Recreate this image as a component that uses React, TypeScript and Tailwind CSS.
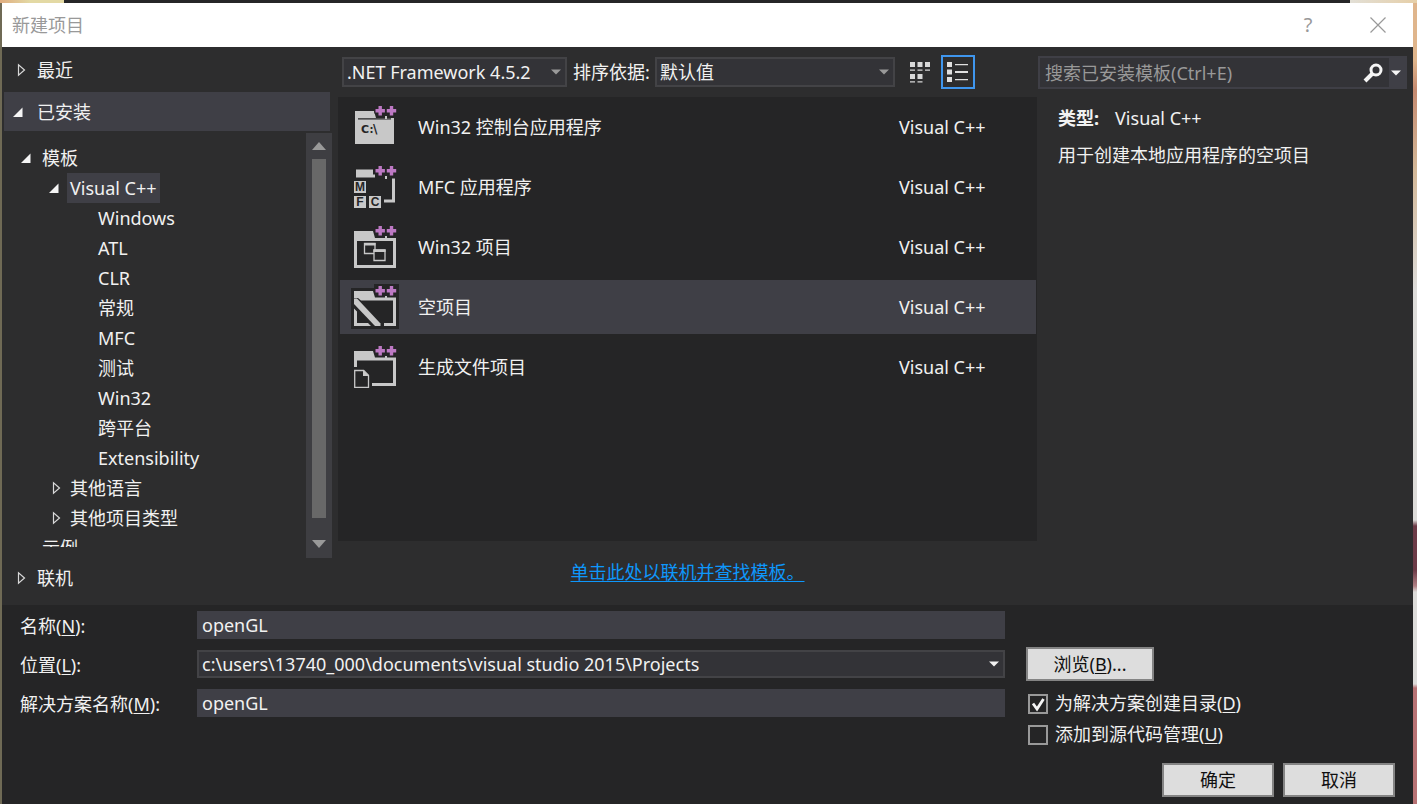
import { useState, type ReactNode } from "react";
import clsx from "clsx";

interface TreeNode {
  label: string;
  level: 0 | 1 | 2;
  state?: "open" | "closed";
}

interface Template {
  id: string;
  name: string;
  icon: ReactNode;
}

const TREE: TreeNode[] = [
  { label: "模板", level: 0, state: "open" },
  { label: "Visual C++", level: 1, state: "open" },
  { label: "Windows", level: 2 },
  { label: "ATL", level: 2 },
  { label: "CLR", level: 2 },
  { label: "常规", level: 2 },
  { label: "MFC", level: 2 },
  { label: "测试", level: 2 },
  { label: "Win32", level: 2 },
  { label: "跨平台", level: 2 },
  { label: "Extensibility", level: 2 },
  { label: "其他语言", level: 1, state: "closed" },
  { label: "其他项目类型", level: 1, state: "closed" },
  { label: "示例", level: 0 },
];

const TREE_INDENT = ["pl-[18px]", "pl-[46px]", "pl-[74px]"];

function Twisty({ open }: { open: boolean }) {
  return (
    <svg width="12" height="14" viewBox="0 0 12 14" className="shrink-0">
      {open ? (
        <path d="M10.5 2.5v9.500H1z" fill="#f5f5f5" />
      ) : (
        <path d="M3.500 1.800v10.400l6-5.200z" fill="none" stroke="#d8d8d8" strokeWidth="1.200" />
      )}
    </svg>
  );
}

function Caret({ className }: { className?: string }) {
  return (
    <svg width="10" height="6" viewBox="0 0 10 6" className={className}>
      <path d="M0 0.500h10L5 5.500z" fill="currentColor" />
    </svg>
  );
}

function IconFrame({ children, plate }: { children: ReactNode; plate?: boolean }) {
  return (
    <svg width="44" height="44" viewBox="0 0 44 44" className="shrink-0 overflow-visible">
      {plate && <path d="M-2 3h23V-1h25v45H-2z" fill="#252526" />}
      {children}
      <path
        d="M25.500 1h3.400v3h3v3.400h-3v3h-3.400v-3h-3V4h3zM36.800 1h3.400v3h3v3.400h-3v3h-3.400v-3h-3V4h3z"
        fill="#bd79c4"
        stroke="#252526"
        strokeWidth="2.400"
        paintOrder="stroke"
      />
      <path d="M32 11h2v3h-2z" fill="#c8c8c8" />
    </svg>
  );
}

const letterStyle = "font-['Liberation_Sans'] font-bold";

const TEMPLATES: Template[] = [
  {
    id: "console",
    name: "Win32 控制台应用程序",
    icon: (
      <IconFrame>
        <path d="M2 6h19l2 7h18v26H2z" fill="#c8c8c8" />
        <path d="M5 13.300h33v1.300H5z" fill="#252526" />
        <text x="8" y="27.500" fontSize="12" fill="#252526" className="font-['DejaVu_Sans'] font-bold">
          <tspan fontSize="11">C</tspan>
          <tspan x="16.500" fontSize="10">:</tspan>
          <tspan x="20">\</tspan>
        </text>
      </IconFrame>
    ),
  },
  {
    id: "mfc",
    name: "MFC 应用程序",
    icon: (
      <IconFrame>
        <path d="M3 4.500h17v5h2v3H3zM39 13.500h3v24H31v-3h8zM1 16h12v12H1zM1 31h12v12H1zM16 31h12v12H16z" fill="#c8c8c8" />
        <g fontSize="12" fill="#252526" textAnchor="middle" className={letterStyle}>
          <text x="7" y="26.300">M</text>
          <text x="7" y="41.300">F</text>
          <text x="22" y="41.300">C</text>
        </g>
      </IconFrame>
    ),
  },
  {
    id: "win32",
    name: "Win32 项目",
    icon: (
      <IconFrame>
        <path fillRule="evenodd" d="M1 6h19l2 7h21v30H1zM4 16v24h36V16z" fill="#c8c8c8" />
        <path d="M11.500 18.500h10.500v10H11.500z" fill="none" stroke="#c8c8c8" strokeWidth="1.300" />
        <path d="M11 18h11.500v2.500H11z" fill="#c8c8c8" />
        <path d="M21 25h11v10.500H21z" fill="#252526" stroke="#c8c8c8" strokeWidth="1.300" />
        <path d="M20.400 24.400h12.200v2.600H20.400z" fill="#c8c8c8" />
      </IconFrame>
    ),
  },
  {
    id: "empty",
    name: "空项目",
    icon: (
      <IconFrame plate>
        <path
          d="M1 6h19l2 6.500h21V41H31v-3h9V15.500H8L5 13H1zM1 23.500l3 3V38h11l3 3H1z"
          fill="#c8c8c8"
        />
        <path d="M1 13.500h3L27.500 38.500V41H22L1 19z" fill="#c8c8c8" />
      </IconFrame>
    ),
  },
  {
    id: "makefile",
    name: "生成文件项目",
    icon: (
      <IconFrame>
        <path d="M1 6h19l2 6.500h21V41H19v-3h21V15.500H4V22H1z" fill="#c8c8c8" />
        <path d="M1.700 25.500h9l4.800 4.800v12H1.700z" fill="none" stroke="#c8c8c8" strokeWidth="1.300" />
        <path d="M10 25v6h6z" fill="#c8c8c8" />
      </IconFrame>
    ),
  },
];

interface ComboProps {
  id: string;
  label?: string;
  options: string[];
  className?: string;
  caretClass: string;
}

function Combo({ id, label, options, className, caretClass }: ComboProps) {
  return (
    <div className={clsx("relative border-2 border-[#434346] bg-[#333337]", className)}>
      <select id={id} aria-label={label} className="block h-full w-full appearance-none pl-[3px] pr-5 outline-none">
        {options.map((option) => (
          <option key={option}>{option}</option>
        ))}
      </select>
      <Caret className={clsx("pointer-events-none absolute right-1 top-1/2 -translate-y-1/2", caretClass)} />
    </div>
  );
}

function SectionHeader({ label, open, className }: { label: string; open?: boolean; className?: string }) {
  return (
    <button className={clsx("flex shrink-0 items-center text-left", className)} aria-expanded={!!open}>
      <Twisty open={!!open} />
      <span className={open ? "pl-[13px]" : "pl-2.5"}>{label}</span>
    </button>
  );
}

function Sidebar() {
  return (
    <aside className="flex w-[330px] shrink-0 flex-col pb-[7px]">
      <SectionHeader label="最近" className="h-[45px] pl-[13px]" />
      <SectionHeader label="已安装" open className="mx-0.5 h-[39px] bg-[#3f3f46] pl-2" />
      <div className="mt-0.5 flex min-h-0 flex-1">
        <div className="min-w-0 flex-1 pb-[11px] pt-2.5">
          <ul className="h-full overflow-hidden">
            {TREE.map((node) => (
              <li key={node.label} className={clsx("flex h-[30px] items-center", TREE_INDENT[node.level])}>
                <span className={clsx("flex w-[19px] shrink-0", node.state === "closed" && "pl-0.5")}>
                  {node.state && <Twisty open={node.state === "open"} />}
                </span>
                <span
                  className={clsx(
                    "flex h-[30px] items-center px-[3px]",
                    node.label === "Visual C++" && "bg-[#3f3f46]",
                  )}
                >
                  {node.label}
                </span>
              </li>
            ))}
          </ul>
        </div>
        <div className="flex w-[26px] flex-col items-center bg-[#3e3e42] text-[#999999]">
          <button aria-label="向上滚动" className="flex h-[26px] items-center">
            <svg width="14" height="8" viewBox="0 0 14 8">
              <path d="M0 8L7 0l7 8z" fill="currentColor" />
            </svg>
          </button>
          <div className="w-3.5 flex-1 bg-[#686868]" />
          <button aria-label="向下滚动" className="flex h-10 items-end pb-2.5">
            <svg width="14" height="8" viewBox="0 0 14 8">
              <path d="M0 0h14L7 8z" fill="currentColor" />
            </svg>
          </button>
        </div>
      </div>
      <SectionHeader label="联机" className="h-10 pl-[13px]" />
    </aside>
  );
}

function ViewButtons() {
  return (
    <div className="flex items-center">
      <button aria-label="中等图标" className="flex h-[34px] w-[34px] items-center justify-center">
        <svg width="22" height="22" viewBox="0 0 22 22" fill="#d8d8d8">
          <path d="M1 1h5v5H1zM8.500 1h5v5h-5zM16 1h5v5h-5zM1 8.500h5v1.200H1zM8.500 8.500h5v1.200h-5zM16 8.500h5v1.200h-5zM1 13h5v5H1zM8.500 13h5v5h-5zM1 20.300h5v1.200H1zM8.500 20.300h5v1.200h-5z" />
        </svg>
      </button>
      <button
        aria-label="小图标"
        aria-pressed="true"
        className="ml-1 flex h-[34px] w-[34px] items-center justify-center border-2 border-[#3f96ee]"
      >
        <svg width="22" height="22" viewBox="0 0 22 22" fill="#e0e0e0">
          <path d="M0 1h5v5H0zM0 8.500h5v5H0zM0 16h5v5H0zM8 3h13v1.300H8zM8 10h13v2H8zM8 18h13v1.300H8z" />
        </svg>
      </button>
    </div>
  );
}

function TemplatePane() {
  const [selected, setSelected] = useState("empty");

  return (
    <main className="ml-1.5 flex min-w-0 flex-1 flex-col">
      <div className="flex h-[50px] shrink-0 items-center pl-1">
        <Combo
          id="framework"
          label="框架版本"
          options={[".NET Framework 4.5.2"]}
          className="h-[30px] w-[225px]"
          caretClass="text-[#999999]"
        />
        <label htmlFor="sort" className="ml-1.5 w-[82px] shrink-0">
          排序依据:
        </label>
        <Combo id="sort" options={["默认值"]} className="mr-2 h-[30px] w-60" caretClass="text-[#999999]" />
        <ViewButtons />
      </div>
      <div className="flex min-h-0 flex-1 flex-col gap-1.5 bg-[#252526] pl-0.5 pr-px pt-[3px]">
        {TEMPLATES.map((template) => (
          <button
            key={template.id}
            onClick={() => setSelected(template.id)}
            className={clsx(
              "flex h-[54px] shrink-0 items-center pl-[13px] text-left",
              selected === template.id && "bg-[#3f3f46]",
            )}
          >
            {template.icon}
            <span className="flex-1 pl-[21px]">{template.name}</span>
            <span className="w-[137px]">Visual C++</span>
          </button>
        ))}
      </div>
      <div className="flex h-16 shrink-0 items-center justify-center pb-0.5">
        <a href="#online" className="text-[#0e97fb] underline underline-offset-2">
          单击此处以联机并查找模板。
        </a>
      </div>
    </main>
  );
}

function Details() {
  return (
    <aside className="ml-px w-[375px] shrink-0 pr-1.5 pt-[9px]">
      <div className="flex h-[33px] border-2 border-[#3f3f46] bg-[#333337]">
        <input
          aria-label="搜索"
          placeholder="搜索已安装模板(Ctrl+E)"
          className="min-w-0 flex-1 pl-[5px] outline-none placeholder:text-[#999999]"
        />
        <button aria-label="搜索" className="px-1.5">
          <svg width="20" height="20" viewBox="0 0 20 20" fill="none" stroke="#f5f5f5">
            <circle cx="13" cy="7" r="5" strokeWidth="3" />
            <path d="M9.500 10.500L2 18" strokeWidth="4" />
          </svg>
        </button>
        <button aria-label="搜索选项" className="w-4 bg-[#3f3f46] pl-0.5 text-[#f5f5f5]">
          <Caret />
        </button>
      </div>
      <div className="space-y-2.5 pl-5 pt-4">
        <p className="leading-[27px]">
          <strong className="mr-4 font-bold">类型:</strong>
          Visual C++
        </p>
        <p className="leading-[27px]">用于创建本地应用程序的空项目</p>
      </div>
    </aside>
  );
}

function Field({ id, text, hotkey, children }: { id: string; text: string; hotkey: string; children: ReactNode }) {
  return (
    <div className="flex h-7 items-center">
      <label htmlFor={id} className="w-[177px] shrink-0 pt-0.5">
        {text}(<u className="underline-offset-2">{hotkey}</u>):
      </label>
      {children}
    </div>
  );
}

function Check({ text, hotkey, defaultChecked }: { text: string; hotkey: string; defaultChecked?: boolean }) {
  return (
    <label className="ml-0.5 flex h-[31px] items-center">
      <span className="relative mr-[7px] flex">
        <input
          type="checkbox"
          defaultChecked={defaultChecked}
          className="peer h-5 w-5 appearance-none border-2 border-[#999999] bg-[#252526]"
        />
        <svg
          viewBox="0 0 20 20"
          className="pointer-events-none absolute inset-0 hidden h-5 w-5 peer-checked:block"
        >
          <path d="M5 9.500l4 5.500 6.500-10" fill="none" stroke="#f5f5f5" strokeWidth="2.800" />
        </svg>
      </span>
      <span className="pb-0.5">
        {text}(<u className="underline-offset-2">{hotkey}</u>)
      </span>
    </label>
  );
}

function PushButton({ children, className }: { children: ReactNode; className?: string }) {
  return (
    <button className={clsx("h-[34px] border-2 border-[#848484] bg-[#dddddd] text-[#101010]", className)}>
      {children}
    </button>
  );
}

export default function App() {
  return (
    <div className="h-screen overflow-hidden bg-[linear-gradient(#dfb58c_0px,#dfb58c_60px,#c58a70_90px,#d3b898_170px,#dddcda_290px,#dddcda_520px,#6c3b47_526px,#6c3b47_570px,#b08084_586px,#dddcda_592px,#dddcda_684px,#b87375_688px,#b87375_804px)]">
      <div className="flex h-full flex-col bg-[linear-gradient(90deg,#6f6a55_0px,#6f6a55_2px,transparent_2px)]">
        {/* strip of desktop above the dialog */}
        <div className="h-[3px] shrink-0 bg-[linear-gradient(90deg,#e0ad80_0px,#e3d9a4_30px,#e3d9a4_64px,#262628_64px,#262628_1350px,#e2dfd6_1350px,#e6cfa8_1417px)]" />
        <div className="flex min-h-0 flex-1 flex-col pl-0.5 pr-1 font-['Noto_Sans','Noto_Sans_CJK_SC',sans-serif] text-lg leading-6 text-[#f1f1f1]">
          <header className="flex h-11 shrink-0 items-center bg-white pl-2.5 text-[#999999]">
            <h1 className="flex-1">新建项目</h1>
            <button aria-label="帮助" className="w-[70px] text-xl">?</button>
            <button aria-label="关闭" className="flex w-[70px] justify-center">
              <svg width="16" height="16" viewBox="0 0 16 16" stroke="#999999" strokeWidth="1.200">
                <path d="M0.500 0.500l15 15M15.500 0.500l-15 15" />
              </svg>
            </button>
          </header>
          <div className="flex min-h-0 flex-1 bg-[#2d2d2e]">
            <Sidebar />
            <TemplatePane />
            <Details />
          </div>
          <form className="flex shrink-0 bg-[#252526]" onSubmit={(e) => e.preventDefault()}>
            <div className="flex flex-1 flex-col gap-[11px] pl-[18px] pt-1.5">
              <Field id="name" text="名称" hotkey="N">
                <input id="name" defaultValue="openGL" className="h-7 min-w-0 flex-1 bg-[#3f3f46] px-[5px] outline-none" />
              </Field>
              <Field id="location" text="位置" hotkey="L">
                <Combo
                  id="location"
                  options={["c:\\users\\13740_000\\documents\\visual studio 2015\\Projects"]}
                  className="h-7 flex-1"
                  caretClass="text-[#f1f1f1]"
                />
              </Field>
              <Field id="solution" text="解决方案名称" hotkey="M">
                <input id="solution" defaultValue="openGL" className="h-7 min-w-0 flex-1 bg-[#3f3f46] px-[5px] outline-none" />
              </Field>
            </div>
            <div className="w-[408px] shrink-0 pb-[7px] pl-[21px] pr-[18px] pt-[42px]">
              <PushButton className="w-32">
                浏览(<u className="underline-offset-2">B</u>)...
              </PushButton>
              <div className="mt-[7px]">
                <Check text="为解决方案创建目录" hotkey="D" defaultChecked />
                <Check text="添加到源代码管理" hotkey="U" />
              </div>
              <div className="mt-[13px] flex justify-end gap-[9px]">
                <PushButton className="w-28">确定</PushButton>
                <PushButton className="w-28">取消</PushButton>
              </div>
            </div>
          </form>
        </div>
      </div>
    </div>
  );
}
